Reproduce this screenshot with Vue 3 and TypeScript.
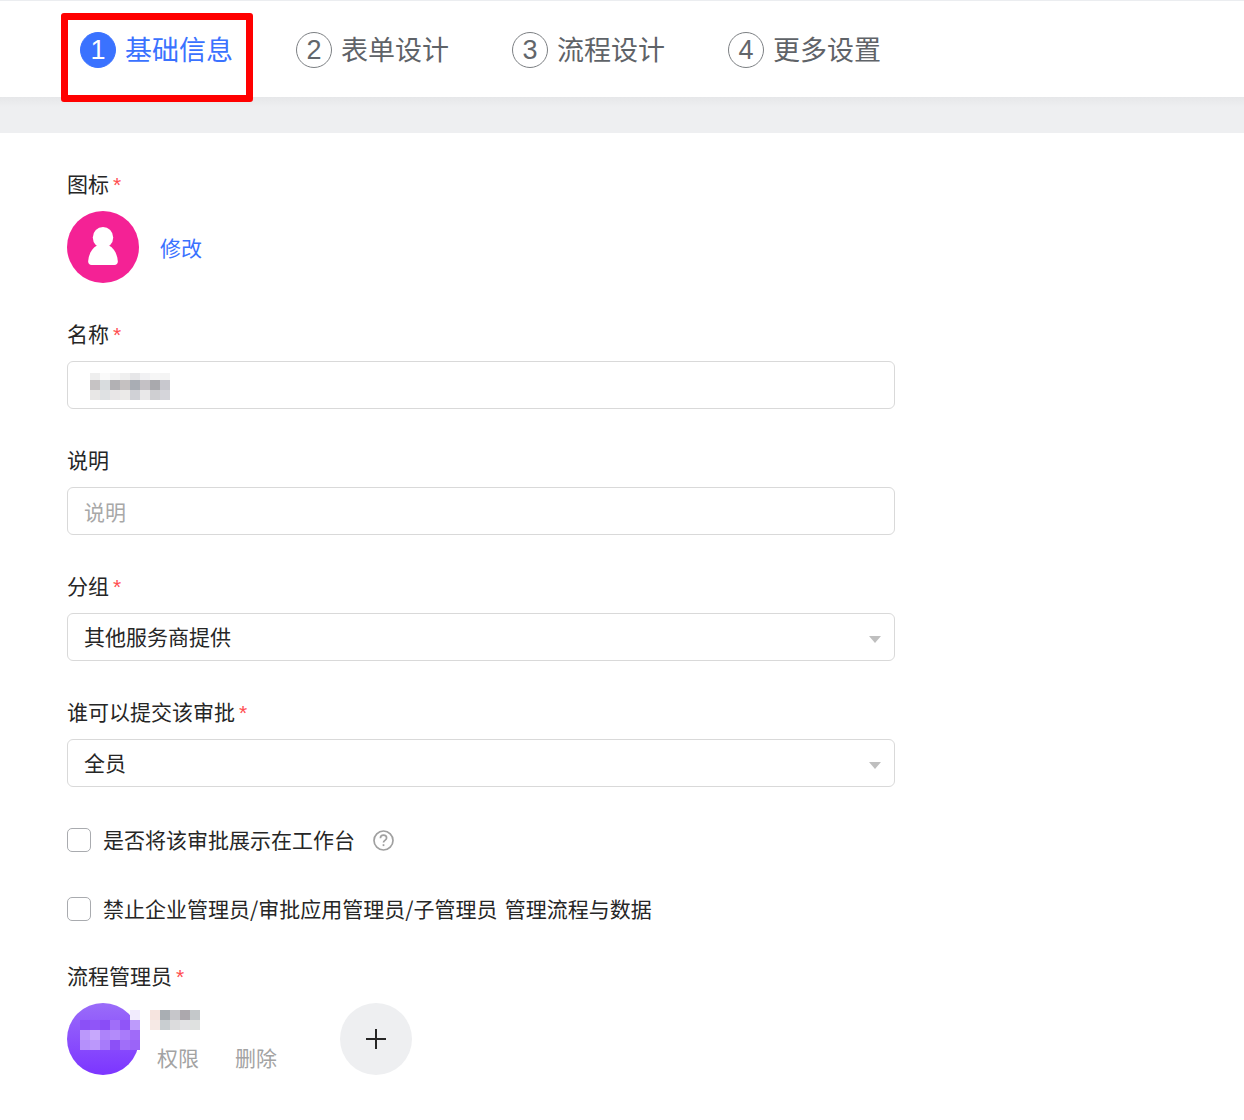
<script setup lang="ts">
const tabs = ['基础信息', '表单设计', '流程设计', '更多设置']
const nameMosaic = [
  ['#eeeeee', '#fafafa', '#f4f4f4', '#efefef', '#e6e6e8', '#f1f1f3', '#f6f6f6', '#f4f4f4'],
  ['#c6c3c4', '#d8dcde', '#b2b1b4', '#c5c1c1', '#a9adb4', '#c4c1c5', '#a9a9ad', '#c8c8ce'],
  ['#e8e7e6', '#dfe1e3', '#e8e6e7', '#ebeae8', '#d0d1d6', '#e9e8e9', '#cfcfd2', '#d5d5da'],
]
const personMosaic = [
  ['#f6e4df', '#a9aeb3', '#c6c6ca', '#aca8ad', '#c4c8ca'],
  ['#f6e9e5', '#c9ced1', '#dcdcdd', '#e2e2e4', '#dfe1e0'],
]
const avatarMosaic = [
  ['', '', '', '', '', '#f1ebfd'],
  ['#8b50f7', '#9055f8', '#8a4df7', '#a06ef9', '#9055f8', '#bd9bfb'],
  ['#bb98fb', '#c7a8fc', '#ad83fa', '#b38bfa', '#a97bfa', '#a06bf9'],
  ['#b590fb', '#bb98fb', '#a77bfa', '#8c50f7', '#a06ef9', '#9b64f8'],
]
</script>

<template>
  <div class="page">
    <header class="steps">
      <div v-for="(tab, i) in tabs" :key="tab" class="step" :class="{ active: i === 0 }">
        <span class="num">{{ i + 1 }}</span>
        <span class="title">{{ tab }}</span>
      </div>
      <div class="highlight"></div>
    </header>
    <div class="strip"></div>
    <main class="form">
      <section class="field">
        <label class="label">图标<i>*</i></label>
        <div class="icon-row">
          <span class="app-icon">
            <svg width="30" height="38" viewBox="0 0 30 38">
              <ellipse cx="15" cy="10.500" rx="10.200" ry="10.500" fill="#fff" />
              <path d="M9 18.500C4 21 .8 27 .2 34C0 36.500 1.500 38 3.500 38H26.500C28.500 38 30 36.500 29.800 34C29.200 27 26 21 21 18.500Z" fill="#fff" />
            </svg>
          </span>
          <a class="link">修改</a>
        </div>
      </section>

      <section class="field">
        <label class="label">名称<i>*</i></label>
        <div class="input">
          <div class="mosaic name-mosaic">
            <div v-for="(row, r) in nameMosaic" :key="r" class="mrow">
              <span v-for="(c, k) in row" :key="k" :style="{ background: c }"></span>
            </div>
          </div>
        </div>
      </section>

      <section class="field">
        <label class="label">说明</label>
        <div class="input placeholder">说明</div>
      </section>

      <section class="field">
        <label class="label">分组<i>*</i></label>
        <div class="input select">其他服务商提供<b class="caret"></b></div>
      </section>

      <section class="field">
        <label class="label">谁可以提交该审批<i>*</i></label>
        <div class="input select">全员<b class="caret"></b></div>
      </section>

      <div class="check first">
        <span class="box"></span>
        <span class="check-text">是否将该审批展示在工作台</span>
        <svg class="help" width="21" height="21" viewBox="0 0 21 21" fill="none" stroke="#a0a0a0" stroke-width="1.700">
          <circle cx="10.500" cy="10.500" r="9.500" />
          <path d="M7.400 8.200c0-1.800 1.400-3.100 3.100-3.100s3.100 1.200 3.100 2.900c0 2.400-3.100 2.400-3.100 4.500" />
          <path d="M10.500 14.200v1.900" />
        </svg>
      </div>

      <div class="check second">
        <span class="box"></span>
        <span class="check-text">禁止企业管理员/审批应用管理员/子管理员 管理流程与数据</span>
      </div>

      <section class="admins">
        <label class="label">流程管理员<i>*</i></label>
        <div class="admin-row">
          <div class="avatar">
            <div class="mosaic avatar-mosaic">
              <div v-for="(row, r) in avatarMosaic" :key="r" class="mrow">
                <span v-for="(c, k) in row" :key="k" :style="{ background: c || 'transparent' }"></span>
              </div>
            </div>
          </div>
          <div class="person">
            <div class="mosaic person-mosaic">
              <div v-for="(row, r) in personMosaic" :key="r" class="mrow">
                <span v-for="(c, k) in row" :key="k" :style="{ background: c }"></span>
              </div>
            </div>
            <div class="actions"><a>权限</a><a>删除</a></div>
          </div>
          <button class="add" type="button">
            <svg width="20" height="20" viewBox="0 0 20 20" stroke="#262626" stroke-width="2"><path d="M0 10h20M10 0v20" /></svg>
          </button>
        </div>
      </section>
    </main>
  </div>
</template>

<style>
html, body { margin: 0; background: #fff; }
</style>

<style scoped>
.page {
  width: 1244px;
  height: 1120px;
  overflow: hidden;
  background: #fff;
  font-family: "Noto Sans CJK SC", "Noto Sans", sans-serif;
  font-size: 21px;
  color: #262626;
}
.steps {
  position: relative;
  box-sizing: border-box;
  height: 97px;
  border-top: 1px solid #ebedf0;
  padding: 31px 0 0 80px;
  display: flex;
  gap: 63px;
}
.step {
  display: flex;
  align-items: center;
  gap: 9px;
  height: 36px;
  color: #5f6368;
}
.num {
  box-sizing: border-box;
  width: 36px;
  height: 36px;
  border-radius: 50%;
  border: 1px solid #7c7f83;
  display: flex;
  align-items: center;
  justify-content: center;
  font-family: "Liberation Sans", sans-serif;
  font-size: 27px;
  color: #62666b;
}
.title { width: 108px; font-size: 27px; line-height: 34px; padding-bottom: 2px; white-space: nowrap; }
.active { color: #3a72ff; }
.active .num { background: #3a72ff; border-color: #3a72ff; color: #fff; }
.highlight {
  position: absolute;
  left: 61px;
  top: 12px;
  width: 192px;
  height: 89px;
  box-sizing: border-box;
  border: 7px solid #ff0000;
  border-radius: 3px;
  z-index: 2;
}
.strip { height: 36px; background: linear-gradient(180deg, #e6e7e9, #eeeff1 10px); }
.form { padding: 34px 0 0 67px; width: 828px; }
.field { margin-bottom: 34px; }
.label {
  display: block;
  height: 32px;
  line-height: 32px;
  margin-bottom: 12px;
  white-space: nowrap;
}
.label i {
  font-style: normal;
  color: #ff4d4f;
  margin-left: 4px;
  font-size: 21px;
  font-family: "Liberation Sans", sans-serif;
}
.icon-row { display: flex; align-items: center; gap: 21px; }
.app-icon {
  width: 72px;
  height: 72px;
  border-radius: 50%;
  background: #f42295;
  display: flex;
  align-items: center;
  justify-content: center;
  padding-bottom: 2px;
  box-sizing: border-box;
}
.link { color: #3a72ff; }
.input {
  position: relative;
  box-sizing: border-box;
  height: 48px;
  border: 1px solid #d9d9d9;
  border-radius: 6px;
  padding: 0 16px;
  line-height: 46px;
  color: #262626;
}
.input.select { line-height: 44px; }
.placeholder { color: #a8a8a8; }
.caret {
  position: absolute;
  right: 13px;
  top: 22px;
  width: 0;
  height: 0;
  border-left: 6px solid transparent;
  border-right: 6px solid transparent;
  border-top: 7px solid #bfbfbf;
}
.mosaic { display: flex; flex-direction: column; }
.mrow { display: flex; }
.mrow span { width: 10px; height: 10px; flex: none; }
.name-mosaic { position: absolute; left: 22px; top: 11px; filter: blur(0.3px); }
.name-mosaic .mrow:first-child span { height: 7px; }
.check { display: flex; align-items: center; height: 32px; white-space: nowrap; }
.check-text { padding-bottom: 2px; }
.first { margin-top: 37px; }
.second { margin-top: 37px; word-spacing: 2.500px; }
.box {
  box-sizing: border-box;
  width: 24px;
  height: 24px;
  border: 1.500px solid #a9abaf;
  border-radius: 5px;
  margin-right: 12px;
}
.help { margin-left: 18px; }
.admins { margin-top: 34px; }
.admin-row { display: flex; align-items: flex-start; }
.avatar {
  position: relative;
  width: 72px;
  height: 72px;
  border-radius: 50%;
  background: linear-gradient(180deg, #9a6cf9, #7c35ff);
  flex: none;
}
.avatar-mosaic { position: absolute; left: 13px; top: 7px; }
.person { margin-left: 18px; width: 183px; flex: none; position: relative; }
.person-mosaic { margin: 7px 0 0 -7px; }
.actions { display: flex; gap: 36px; color: #a3a3a3; margin-top: 11px; line-height: 32px; }
.add {
  width: 72px;
  height: 72px;
  border: 0;
  padding: 0;
  border-radius: 50%;
  background: #eeeff1;
  display: flex;
  align-items: center;
  justify-content: center;
}
</style>
